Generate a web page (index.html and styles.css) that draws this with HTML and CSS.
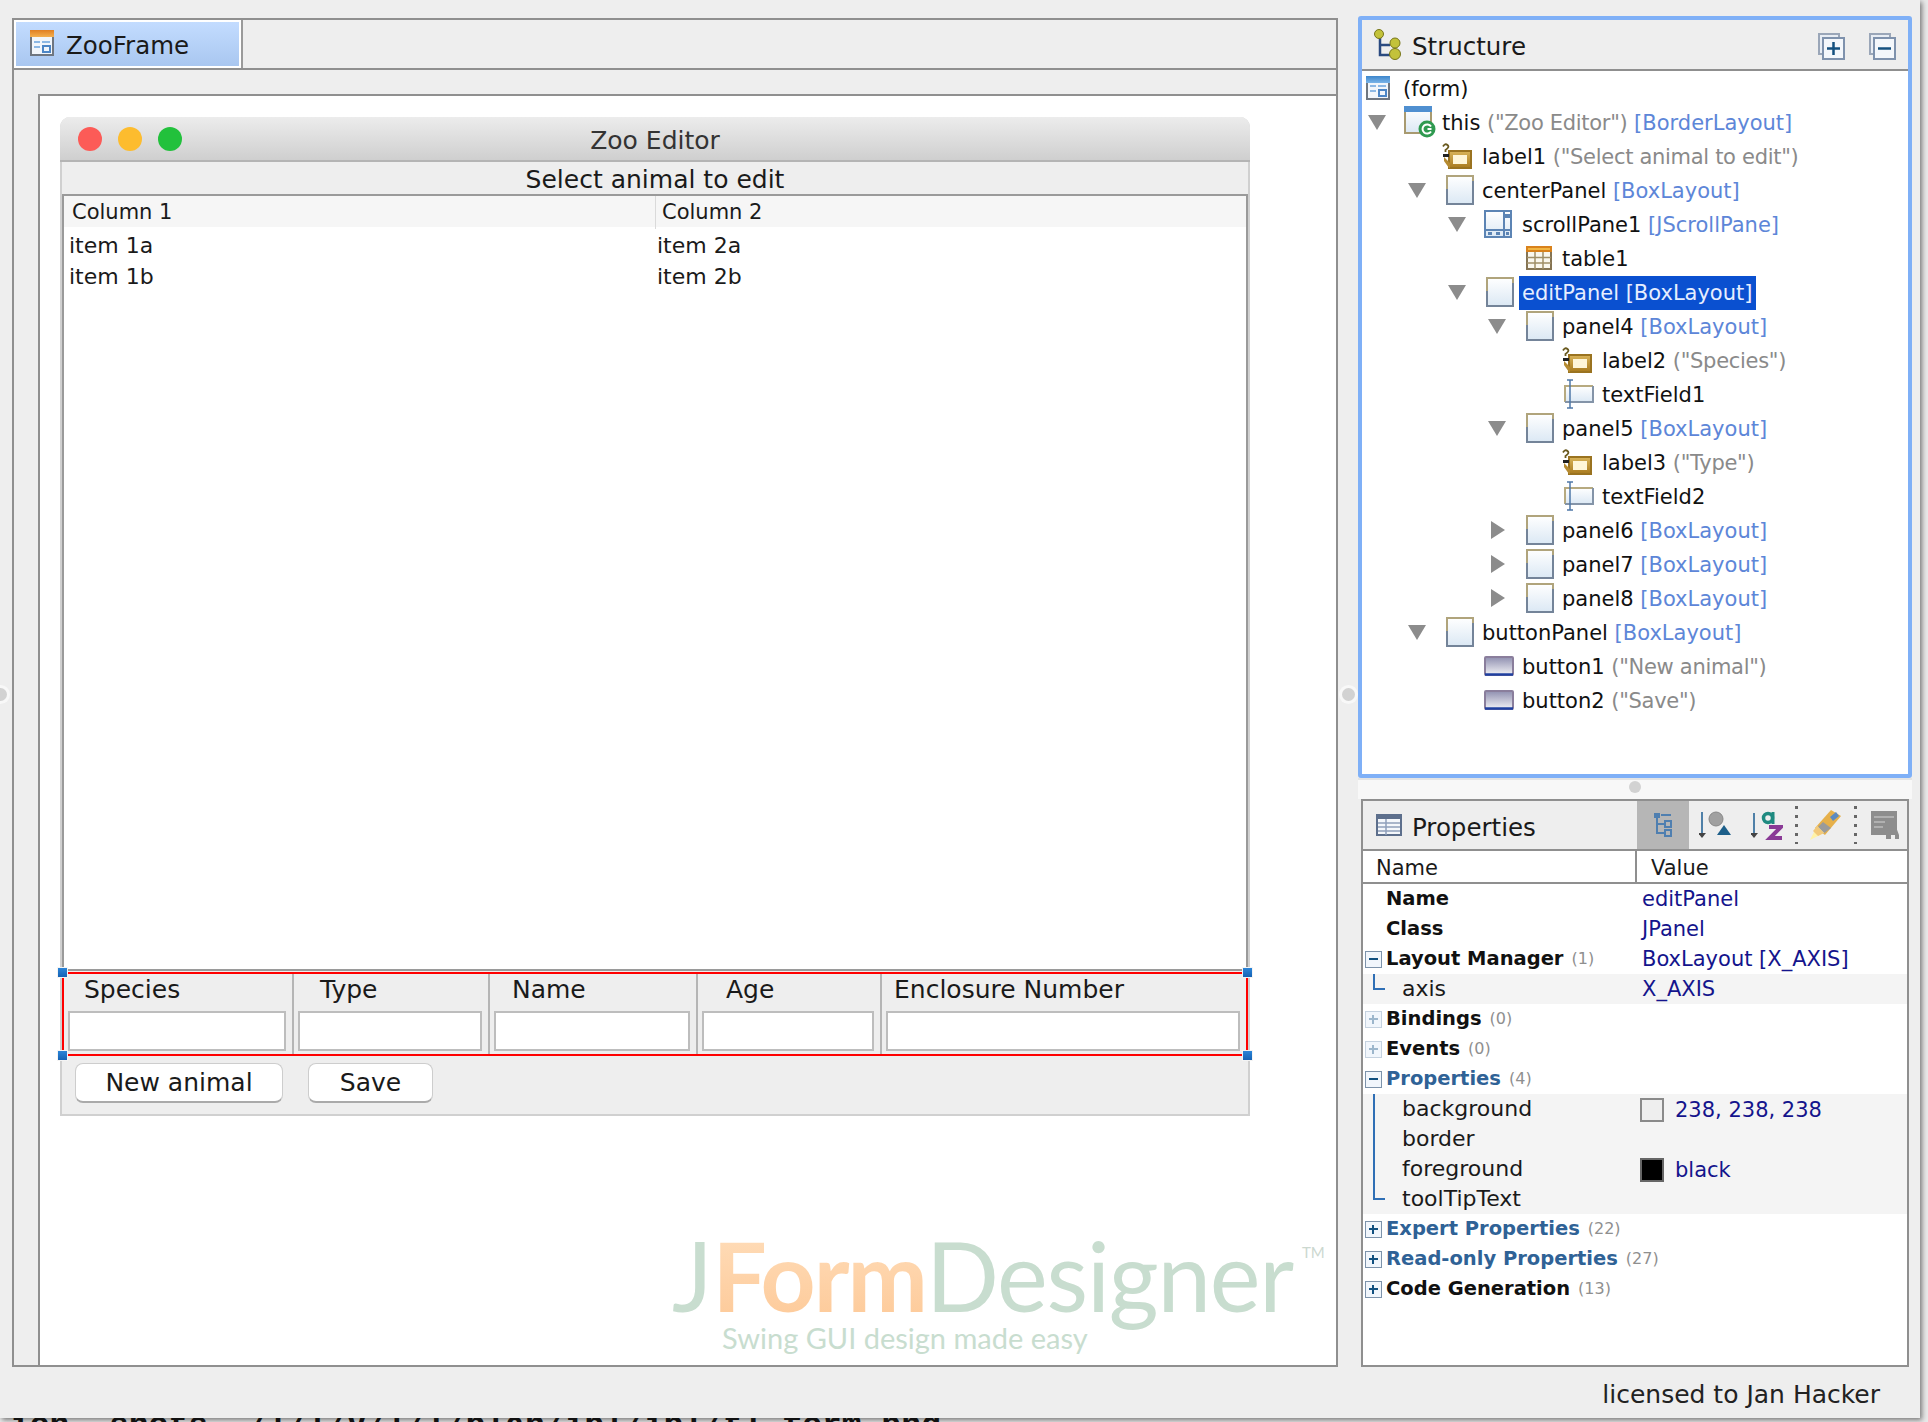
FILE: index.html
```html
<!DOCTYPE html>
<html lang="en">
<head>
	<meta charset="UTF-8">
	<title>JFormDesigner</title>
	<link rel="stylesheet" href="styles.css">
</head>
<body>
	<svg class="defs" width="0" height="0">
		<defs>
			<linearGradient id="panelfill" x1="0" y1="0" x2="0" y2="1"><stop offset="0" stop-color="#fff"/><stop offset="1" stop-color="#dbe8f4"/></linearGradient>
			<linearGradient id="btnfill" x1="0" y1="0" x2="0" y2="1"><stop offset="0" stop-color="#8f8fb0"/><stop offset="1" stop-color="#f2f2f6"/></linearGradient>
			<linearGradient id="tagfill" x1="0" y1="0" x2="0" y2="1"><stop offset="0" stop-color="#d9b45a"/><stop offset="1" stop-color="#a87a1e"/></linearGradient>
			<symbol id="i-form" viewBox="0 0 24 24">
				<rect x="1" y="1" width="22" height="22" fill="#f2f6fb" stroke="#6f7680" stroke-width="2"/>
				<rect x="4" y="9" width="6" height="2" fill="#8db8e4"/><rect x="4" y="14" width="6" height="2" fill="#8db8e4"/>
				<rect x="12" y="9" width="8" height="2" fill="#8db8e4"/><rect x="13" y="14" width="7" height="6" fill="none" stroke="#4d86c6" stroke-width="2"/>
			</symbol>
			<symbol id="i-panel" viewBox="0 0 28 30">
				<rect x="1" y="1" width="26" height="28" fill="url(#panelfill)"/>
				<path d="M1 29V1H27V6" fill="none" stroke="#b0a47c" stroke-width="2"/>
				<path d="M1 14V29H27V6" fill="none" stroke="#748499" stroke-width="2"/>
			</symbol>
			<symbol id="i-this" viewBox="0 0 32 32">
				<rect x="1" y="1" width="26" height="26" fill="url(#panelfill)" stroke="#a89a70" stroke-width="2"/>
				<rect x="0" y="0" width="28" height="6" fill="#4f8fd0"/>
				<circle cx="23" cy="23" r="8.500" fill="#2f9a50"/>
				<path d="M27 20.500A4.600 4.600 0 1 0 27 25.500M23.500 23H27.500" fill="none" stroke="#fff" stroke-width="2"/>
			</symbol>
			<symbol id="i-label" viewBox="0 0 30 26">
				<rect x="7" y="8" width="22" height="17" fill="url(#tagfill)" stroke="#9a7320" stroke-width="2"/>
				<rect x="11" y="12" width="14" height="9" fill="#fff6d8"/>
				<path d="M1 3.500Q3 0 5.500 2T3.500 7V9" fill="none" stroke="#6a5a20" stroke-width="1.800"/>
				<rect x="1" y="11" width="6" height="3" fill="#222"/><path d="M2 14L8 20V25H7L2 18Z" fill="#b58a30"/>
			</symbol>
			<symbol id="i-field" viewBox="0 0 30 30">
				<rect x="1" y="7" width="28" height="16" fill="url(#panelfill)"/>
				<path d="M1 23V7H29" fill="none" stroke="#b7aa80" stroke-width="2"/>
				<path d="M1 23H29V7" fill="none" stroke="#8494a8" stroke-width="2"/>
				<path d="M3 1H9M3 29H9M6 1V29" fill="none" stroke="#4f78a8" stroke-width="1.500"/>
			</symbol>
			<symbol id="i-button" viewBox="0 0 30 20">
				<rect x="1" y="1" width="28" height="18" rx="1" fill="url(#btnfill)" stroke="#8a7e9c" stroke-width="2"/>
				<path d="M1 18.500H29" stroke="#2040a0" stroke-width="2.500"/>
			</symbol>
			<symbol id="i-table" viewBox="0 0 26 24">
				<rect x="1" y="1" width="24" height="22" fill="#faf7ef" stroke="#857453" stroke-width="2"/>
				<rect x="0" y="0" width="26" height="6" fill="#d9821c"/><rect x="2" y="2" width="22" height="2" fill="#f2b642"/>
				<path d="M9 6V23M17 6V23M1 11.500H25M1 17H25" stroke="#a08f68" stroke-width="1.500"/>
			</symbol>
			<symbol id="i-scroll" viewBox="0 0 28 28">
				<rect x="1" y="1" width="26" height="26" fill="url(#panelfill)" stroke="#5c84b4" stroke-width="2"/>
				<path d="M20 1V27M1 20H27" stroke="#5c84b4" stroke-width="2"/>
				<rect x="21" y="4" width="5" height="4" fill="#5c84b4"/><rect x="4" y="22" width="4" height="3" fill="#5c84b4"/><rect x="12" y="22" width="4" height="3" fill="#5c84b4"/><rect x="22" y="22" width="3" height="3" fill="#5c84b4"/>
			</symbol>
		</defs>
	</svg>

	<div class="shell">
		<div class="app">
			<div class="grip grip-left"><span class="grip-dot"></span></div>

			<div class="editor">
				<div class="tabs">
					<div class="tab">
						<svg class="tab-icon" width="24" height="24"><use href="#i-form"/></svg>
						<span class="tab-band"></span>
						ZooFrame
					</div>
				</div>
				<div class="canvas">
					<div class="window">
						<div class="titlebar">
							<span class="light red"></span>
							<span class="light amber"></span>
							<span class="light green"></span>
							<span class="title">Zoo Editor</span>
						</div>
						<div class="select-label">Select animal to edit</div>
						<div class="table-box">
							<div class="table-grid table-head">
								<div>Column 1</div>
								<div class="col-two">Column 2</div>
							</div>
							<div class="table-grid table-row"><div>item 1a</div><div>item 2a</div></div>
							<div class="table-grid table-row"><div>item 1b</div><div>item 2b</div></div>
						</div>
						<div class="edit-panel">
							<span class="handle tl"></span>
							<span class="handle tr"></span>
							<span class="handle bl"></span>
							<span class="handle br"></span>
							<div class="edit-col"><div class="edit-label">Species</div><div class="edit-field"></div></div>
							<div class="edit-col"><div class="edit-label">Type</div><div class="edit-field"></div></div>
							<div class="edit-col"><div class="edit-label">Name</div><div class="edit-field"></div></div>
							<div class="edit-col"><div class="edit-label">Age</div><div class="edit-field"></div></div>
							<div class="edit-col"><div class="edit-label">Enclosure Number</div><div class="edit-field"></div></div>
						</div>
						<div class="button-row">
							<div class="btn btn-new">New animal</div>
							<div class="btn btn-save">Save</div>
						</div>
					</div>

					<div class="logo">
						<div class="logo-name"><span class="logo-j">J</span><span class="logo-form">Form</span><span class="logo-designer">Designer</span></div>
						<div class="logo-tag">Swing GUI design made easy</div>
						<span class="logo-tm">TM</span>
					</div>
				</div>
			</div>

			<div class="grip grip-mid"><span class="grip-dot"></span></div>

			<div class="side">
				<div class="structure">
					<div class="panel-head">
						<svg class="head-icon" width="28" height="32" viewBox="0 0 28 32">
							<path d="M6 6V26H16M6 16H16" fill="none" stroke="#2a4a80" stroke-width="2.500"/>
							<circle cx="5" cy="5" r="4.500" fill="#c3c23a" stroke="#77761a"/>
							<circle cx="21" cy="14" r="5" fill="#c3c23a" stroke="#77761a"/>
							<circle cx="21" cy="25" r="5.500" fill="#c3c23a" stroke="#77761a"/>
						</svg>
						<span class="panel-title">Structure</span>
						<svg class="head-btn" width="27" height="27" viewBox="0 0 27 27">
							<rect x="1" y="1" width="20" height="20" fill="#e8edf4" stroke="#9aa6b8" stroke-width="2"/>
							<rect x="5" y="5" width="21" height="21" fill="#f4f7fb" stroke="#7f92ad" stroke-width="2"/>
							<path d="M15.500 9V22M9 15.500H22" stroke="#14507f" stroke-width="2.500"/>
						</svg>
						<svg class="head-btn" width="27" height="27" viewBox="0 0 27 27">
							<rect x="1" y="1" width="20" height="20" fill="#e8edf4" stroke="#9aa6b8" stroke-width="2"/>
							<rect x="5" y="5" width="21" height="21" fill="#f4f7fb" stroke="#7f92ad" stroke-width="2"/>
							<path d="M9 15.500H22" stroke="#14507f" stroke-width="2.500"/>
						</svg>
					</div>
					<div class="tree">
						<div class="row root">
							<svg class="node-icon" width="24" height="24"><use href="#i-form"/></svg><span class="form-band"></span>
							<span class="node-text">(form)</span>
						</div>
						<div class="row d0"><i class="arrow down"></i><svg class="node-icon ic-this" width="32" height="32"><use href="#i-this"/></svg><span class="node-text">this <em>("Zoo Editor")</em> <b>[BorderLayout]</b></span></div>
						<div class="row d1"><i class="arrow"></i><svg class="node-icon ic-label" width="30" height="26"><use href="#i-label"/></svg><span class="node-text">label1 <em>("Select animal to edit")</em></span></div>
						<div class="row d1"><i class="arrow down"></i><svg class="node-icon ic-panel" width="28" height="30"><use href="#i-panel"/></svg><span class="node-text">centerPanel <b>[BoxLayout]</b></span></div>
						<div class="row d2"><i class="arrow down"></i><svg class="node-icon ic-scroll" width="28" height="28"><use href="#i-scroll"/></svg><span class="node-text">scrollPane1 <b>[JScrollPane]</b></span></div>
						<div class="row d3"><i class="arrow"></i><svg class="node-icon ic-table" width="26" height="24"><use href="#i-table"/></svg><span class="node-text">table1</span></div>
						<div class="row d2"><i class="arrow down"></i><svg class="node-icon ic-panel" width="28" height="30"><use href="#i-panel"/></svg><span class="node-text selected">editPanel [BoxLayout]</span></div>
						<div class="row d3"><i class="arrow down"></i><svg class="node-icon ic-panel" width="28" height="30"><use href="#i-panel"/></svg><span class="node-text">panel4 <b>[BoxLayout]</b></span></div>
						<div class="row d4"><i class="arrow"></i><svg class="node-icon ic-label" width="30" height="26"><use href="#i-label"/></svg><span class="node-text">label2 <em>("Species")</em></span></div>
						<div class="row d4"><i class="arrow"></i><svg class="node-icon" width="30" height="30"><use href="#i-field"/></svg><span class="node-text">textField1</span></div>
						<div class="row d3"><i class="arrow down"></i><svg class="node-icon ic-panel" width="28" height="30"><use href="#i-panel"/></svg><span class="node-text">panel5 <b>[BoxLayout]</b></span></div>
						<div class="row d4"><i class="arrow"></i><svg class="node-icon ic-label" width="30" height="26"><use href="#i-label"/></svg><span class="node-text">label3 <em>("Type")</em></span></div>
						<div class="row d4"><i class="arrow"></i><svg class="node-icon" width="30" height="30"><use href="#i-field"/></svg><span class="node-text">textField2</span></div>
						<div class="row d3"><i class="arrow right"></i><svg class="node-icon ic-panel" width="28" height="30"><use href="#i-panel"/></svg><span class="node-text">panel6 <b>[BoxLayout]</b></span></div>
						<div class="row d3"><i class="arrow right"></i><svg class="node-icon ic-panel" width="28" height="30"><use href="#i-panel"/></svg><span class="node-text">panel7 <b>[BoxLayout]</b></span></div>
						<div class="row d3"><i class="arrow right"></i><svg class="node-icon ic-panel" width="28" height="30"><use href="#i-panel"/></svg><span class="node-text">panel8 <b>[BoxLayout]</b></span></div>
						<div class="row d1"><i class="arrow down"></i><svg class="node-icon ic-panel" width="28" height="30"><use href="#i-panel"/></svg><span class="node-text">buttonPanel <b>[BoxLayout]</b></span></div>
						<div class="row d2"><i class="arrow"></i><svg class="node-icon" width="30" height="20"><use href="#i-button"/></svg><span class="node-text">button1 <em>("New animal")</em></span></div>
						<div class="row d2"><i class="arrow"></i><svg class="node-icon" width="30" height="20"><use href="#i-button"/></svg><span class="node-text">button2 <em>("Save")</em></span></div>
					</div>
				</div>

				<div class="splitter"><span class="grip-dot"></span></div>

				<div class="props">
					<div class="panel-head props-head">
						<svg class="head-icon" width="26" height="22" viewBox="0 0 26 22">
							<rect x="1" y="1" width="24" height="20" fill="#f4f7fb" stroke="#5d6f8c" stroke-width="2"/>
							<rect x="1" y="1" width="24" height="4" fill="#5d6f8c"/>
							<path d="M2 9H24M2 13H24M2 17H24M10 5V21" stroke="#8fa0bb" stroke-width="1.500"/>
						</svg>
						<span class="panel-title">Properties</span>
						<div class="toolbar">
							<div class="tool tool-on">
								<svg width="20" height="28" viewBox="0 0 20 28"><path d="M4 5V22H12M4 13H12M8 4H18" fill="none" stroke="#4f7fb0" stroke-width="2"/><rect x="1" y="2" width="6" height="5" fill="#4f7fb0"/><rect x="12" y="10" width="6" height="6" fill="none" stroke="#4f7fb0" stroke-width="2"/><rect x="12" y="19" width="6" height="6" fill="none" stroke="#4f7fb0" stroke-width="2"/></svg>
							</div>
							<div class="tool">
								<svg width="32" height="30" viewBox="0 0 32 30"><path d="M3 2V26" stroke="#4f80a8" stroke-width="2"/><path d="M-1 23H7L3 28Z" fill="#444"/><circle cx="17" cy="9" r="7" fill="#a0a0a0" stroke="#888"/><path d="M25 15L32 25H18Z" fill="#1d5f8a"/></svg>
							</div>
							<div class="tool">
								<svg width="32" height="32" viewBox="0 0 32 32"><path d="M3 4V27" stroke="#4f80a8" stroke-width="2"/><path d="M-1 24H7L3 29Z" fill="#444"/><circle cx="17" cy="9" r="4.500" fill="none" stroke="#1f8a80" stroke-width="3.500"/><path d="M22 3V15" stroke="#1f8a80" stroke-width="3"/><path d="M18 18H30L19 29H31" fill="none" stroke="#8a3a96" stroke-width="4"/></svg>
							</div>
							<span class="dots"></span>
							<div class="tool">
								<svg width="34" height="32" viewBox="0 0 32 32"><path d="M21 1L31 7L15 26L5 19Z" fill="#e6b04a"/><path d="M26 3L29 7L23 12L20 8Z" fill="#5c8ac0"/><path d="M13 13L21 19L13 25L7 19Z" fill="#9a9a9a"/><path d="M7 17L14 24L0 31Z" fill="#fff2a8"/><path d="M7 17L14 24L8 27L3 22Z" fill="#f2c97a"/></svg>
							</div>
							<span class="dots"></span>
							<div class="tool">
								<svg width="28" height="28" viewBox="0 0 28 28"><rect x="0" y="0" width="26" height="24" fill="#8d8d8d"/><path d="M3 6H23M3 11H14M3 16H12" stroke="#b0b0b0" stroke-width="2"/><path d="M15 24L18 16H25L28 24V28H24V24H20V28H15Z" fill="#8d8d8d"/></svg>
							</div>
						</div>
					</div>
					<div class="prop-head">
						<div class="prop-head-name">Name</div>
						<div class="prop-head-value">Value</div>
					</div>
					<div class="prow"><div class="pname strong"><span class="pbox empty"></span>Name</div><div class="pvalue">editPanel</div></div>
					<div class="prow"><div class="pname strong"><span class="pbox empty"></span>Class</div><div class="pvalue">JPanel</div></div>
					<div class="prow"><div class="pname strong"><span class="pbox minus"></span>Layout Manager <small>(1)</small></div><div class="pvalue">BoxLayout [X_AXIS]</div></div>
					<div class="prow sub last"><div class="pname">axis</div><div class="pvalue">X_AXIS</div></div>
					<div class="prow"><div class="pname strong"><span class="pbox plus faint"></span>Bindings <small>(0)</small></div></div>
					<div class="prow"><div class="pname strong"><span class="pbox plus faint"></span>Events <small>(0)</small></div></div>
					<div class="prow"><div class="pname strong link"><span class="pbox minus"></span>Properties <small>(4)</small></div></div>
					<div class="prow sub"><div class="pname">background</div><div class="pvalue has-swatch"><span class="swatch light-swatch"></span>238, 238, 238</div></div>
					<div class="prow sub"><div class="pname">border</div></div>
					<div class="prow sub"><div class="pname">foreground</div><div class="pvalue has-swatch"><span class="swatch black-swatch"></span>black</div></div>
					<div class="prow sub last"><div class="pname">toolTipText</div></div>
					<div class="prow"><div class="pname strong link"><span class="pbox plus"></span>Expert Properties <small>(22)</small></div></div>
					<div class="prow"><div class="pname strong link"><span class="pbox plus"></span>Read-only Properties <small>(27)</small></div></div>
					<div class="prow"><div class="pname strong"><span class="pbox plus"></span>Code Generation <small>(13)</small></div></div>
				</div>
			</div>
		</div>
		<div class="statusbar">licensed to Jan Hacker</div>
	</div>
	<div class="behind">ion  shots  /l/l/V/l/l/blah/ibl/ibl/tl form.png</div>
</body>
</html>
```

FILE: styles.css
```css
html, body {
	margin: 0;
	padding: 0;
}
body {
	width: 1928px;
	height: 1422px;
	overflow: hidden;
	background: #e9e9e9;
	font-family: "DejaVu Sans", sans-serif;
	color: #1a1a1a;
}
.defs {
	display: block;
	height: 0;
}
.shell {
	width: 1920px;
	height: 1418px;
	background: #eee;
	box-shadow: 2px 2px 5px #777;
}
.app {
	display: flex;
	height: 1367px;
}

/* splitter grips */
.grip {
	display: flex;
	align-items: center;
	justify-content: center;
	flex: none;
	box-sizing: border-box;
	padding-top: 22px;
}
.grip-left {
	width: 13px;
	margin-left: -6px;
}
.grip-mid {
	width: 20px;
}
.grip-dot {
	display: block;
	width: 13px;
	height: 13px;
	border-radius: 50%;
	background: #d2d2d2;
	box-shadow: 0 0 0 3px #f8f8f8;
}

/* left side: form editor */
.editor {
	display: flex;
	flex-direction: column;
	box-sizing: border-box;
	width: 1326px;
	height: 1349px;
	margin-top: 18px;
	margin-left: 5px;
	border: 2px solid #8f8f8f;
}
.tabs {
	flex: none;
	height: 48px;
	border-bottom: 2px solid #8f8f8f;
}
.tab {
	position: relative;
	display: flex;
	align-items: center;
	box-sizing: border-box;
	width: 227px;
	height: 48px;
	padding-left: 14px;
	padding-top: 3px;
	border: 2px solid #fff;
	background: linear-gradient(#c3dcff, #a9c7f0);
	font-size: 24.500px;
	box-shadow: 2px 0 0 #9a9a9a;
}
.tab-icon {
	margin-top: -3px;
	margin-right: 12px;
}
.tab-band {
	position: absolute;
	left: 14px;
	top: 8px;
	width: 24px;
	height: 7px;
	background: linear-gradient(#e07f22, #f4b050);
}
.canvas {
	position: relative;
	flex: 1;
	margin-top: 24px;
	margin-left: 24px;
	padding: 21px 0 0 20px;
	border-top: 2px solid #8f8f8f;
	border-left: 2px solid #8f8f8f;
	background: #fff;
}

/* the previewed window */
.window {
	box-sizing: border-box;
	width: 1190px;
	height: 999px;
	border: 2px solid #d0d0d0;
	border-top: 0;
	border-radius: 10px 10px 0 0;
	background: #eee;
}
.titlebar {
	position: relative;
	display: flex;
	align-items: center;
	gap: 16px;
	height: 42px;
	padding-left: 18px;
	padding-top: 1px;
	margin: 0 -2px;
	border-bottom: 2px solid #b4b4b4;
	border-radius: 10px 10px 0 0;
	background: linear-gradient(#ececec, #cfcfcf);
}
.light {
	flex: none;
	width: 24px;
	height: 24px;
	border-radius: 50%;
}
.red { background: #fc5b57; }
.amber { background: #fdbc2e; }
.green { background: #22c13c; }
.title {
	position: absolute;
	left: 0;
	right: 0;
	top: 7px;
	text-align: center;
	font-size: 25px;
	line-height: 34px;
	color: #333;
}
.select-label {
	height: 32px;
	line-height: 35px;
	text-align: center;
	font-size: 25px;
}
.table-box {
	box-sizing: border-box;
	height: 777px;
	border: 2px solid #9a9a9a;
	background: #fff;
}
.table-grid {
	display: grid;
}
.table-head {
	height: 31px;
	line-height: 33px;
	padding-left: 8px;
	grid-template-columns: 583px 1fr;
	background: #f6f6f6;
	font-size: 21px;
}
.col-two {
	padding-left: 6px;
	border-left: 1px solid #dadada;
}
.table-row {
	height: 31px;
	line-height: 33px;
	padding-left: 5px;
	grid-template-columns: 588px 1fr;
	font-size: 22px;
}
.table-head + .table-row {
	margin-top: 2px;
}
.edit-panel {
	position: relative;
	display: grid;
	grid-template-columns: 230px 196px 208px 184px 1fr;
	box-sizing: border-box;
	height: 84px;
	margin-top: 1px;
	border: 2px solid #f00;
}
.handle {
	position: absolute;
	width: 9px;
	height: 9px;
	background: linear-gradient(#2a84d8, #1562b4);
	border: 1px solid #f4f4f4;
}
.tl { left: -7px; top: -7px; }
.tr { right: -7px; top: -7px; }
.bl { left: -7px; bottom: -7px; }
.br { right: -7px; bottom: -7px; }
.edit-col {
	box-sizing: border-box;
	padding: 0 6px 0 4px;
	border-right: 2px solid #b5b5b5;
}
.edit-col:last-child {
	border-right: 0;
}
.edit-label {
	height: 37px;
	line-height: 31px;
	font-size: 25px;
}
.edit-col:nth-child(5) .edit-label { padding-left: 16px; }
.edit-col:nth-child(6) .edit-label { padding-left: 22px; }
.edit-col:nth-child(7) .edit-label { padding-left: 18px; }
.edit-col:nth-child(8) .edit-label { padding-left: 24px; }
.edit-col:nth-child(9) .edit-label { padding-left: 8px; }
.edit-field {
	box-sizing: border-box;
	height: 40px;
	border: 2px solid #bdbdbd;
	background: #fff;
}
.button-row {
	display: flex;
	gap: 25px;
	padding: 7px 0 0 13px;
}
.btn {
	box-sizing: border-box;
	height: 40px;
	line-height: 38px;
	text-align: center;
	font-size: 25px;
	border: 1px solid #cdcdcd;
	border-bottom: 2px solid #aaa;
	border-radius: 8px;
	background: #fff;
}
.btn-new { width: 208px; }
.btn-save { width: 125px; }

/* logo */
.logo {
	position: absolute;
	left: 632px;
	top: 1131px;
	width: 670px;
	font-family: "Lato", sans-serif;
	color: #c8ddcf;
}
.logo-name {
	font-size: 96px;
	line-height: 96px;
	font-weight: 400;
	white-space: nowrap;
}
.logo-form {
	font-weight: 700;
	letter-spacing: -2px;
	background: linear-gradient(#ffdfbd, #fdc896);
	-webkit-background-clip: text;
	background-clip: text;
	color: transparent;
}
.logo-designer {
	letter-spacing: -1.200px;
}
.logo-tag {
	margin: -2px 0 0 50px;
	font-size: 29px;
	font-weight: 400;
	line-height: 34px;
	white-space: nowrap;
}
.logo-tm {
	position: absolute;
	left: 630px;
	top: 16px;
	font-size: 15px;
	color: #ccd8d0;
}

/* right side */
.side {
	flex: none;
	width: 554px;
	margin-top: 16px;
}
.structure {
	box-sizing: border-box;
	height: 762px;
	border: 4px solid #7fb0f7;
	border-radius: 3px;
	background: #fff;
}
.panel-head {
	display: flex;
	align-items: center;
	box-sizing: border-box;
	height: 51px;
	padding-left: 12px;
	border-bottom: 2px solid #8f8f8f;
	background: #eee;
}
.head-icon {
	flex: none;
	margin-right: 10px;
}
.panel-title {
	flex: 1;
	margin-top: 4px;
	font-size: 24.500px;
}
.head-btn {
	flex: none;
	margin-right: 12px;
	margin-left: 12px;
	margin-top: 3px;
}
.tree {
	font-size: 21px;
}
.row {
	display: flex;
	align-items: center;
	height: 34px;
	white-space: nowrap;
}
.root {
	position: relative;
	padding-left: 4px;
}
.form-band {
	position: absolute;
	left: 4px;
	top: 5px;
	width: 24px;
	height: 7px;
	background: linear-gradient(#3d86cc, #7ab4e8);
}
.root .node-icon {
	margin-right: 13px;
}
.d0 { padding-left: 6px; }
.d1 { padding-left: 46px; }
.d2 { padding-left: 86px; }
.d3 { padding-left: 126px; }
.d4 { padding-left: 166px; }
.arrow {
	flex: none;
	display: block;
	box-sizing: border-box;
	width: 36px;
}
.arrow.down::before,
.arrow.right::before {
	content: "";
	display: block;
	width: 0;
	height: 0;
}
.arrow.down::before {
	border-left: 9px solid transparent;
	border-right: 9px solid transparent;
	border-top: 15px solid #8c8c8c;
}
.arrow.right::before {
	margin-left: 3px;
	border-top: 9px solid transparent;
	border-bottom: 9px solid transparent;
	border-left: 14px solid #8c8c8c;
}
.node-icon {
	flex: none;
	margin-right: 8px;
}
.ic-panel { margin-left: 2px; margin-right: 8px; }
.ic-scroll { margin-right: 10px; }
.ic-table { margin-left: 2px; margin-right: 10px; }
.ic-this { margin-right: 6px; }
.ic-label { margin-left: -2px; margin-right: 10px; }
.node-text {
	margin-top: 2px;
	color: #111;
}
.node-text em {
	font-style: normal;
	letter-spacing: -0.300px;
	color: #8a8a8a;
}
.node-text b {
	font-weight: normal;
	color: #5d86d8;
}
.selected {
	height: 34px;
	line-height: 34px;
	margin-left: -3px;
	padding: 0 4px 0 3px;
	background: #0a50d0;
	color: #e6eeff;
}
.splitter {
	display: flex;
	align-items: center;
	justify-content: center;
	height: 21px;
	padding-bottom: 3px;
	box-sizing: border-box;
	background: linear-gradient(#e4e4e4 2px, #f8f8f8 2px);
}
.splitter .grip-dot {
	box-shadow: none;
	width: 12px;
	height: 12px;
}
.props {
	box-sizing: border-box;
	height: 568px;
	margin: 0 3px;
	border: 2px solid #8f8f8f;
	background: #fff;
}
.props-head {
	height: 50px;
	padding-left: 13px;
}
.props-head .panel-title {
	flex: none;
	width: 225px;
}
.toolbar {
	display: flex;
	align-items: center;
	height: 48px;
}
.tool {
	display: flex;
	align-items: center;
	justify-content: center;
	width: 52px;
	height: 48px;
}
.tool-on {
	background: #b6b6b6;
}
.dots {
	flex: none;
	width: 3px;
	height: 38px;
	margin: 0 2px;
	background: repeating-linear-gradient(#666 0 3px, transparent 3px 9px);
}
.prop-head {
	display: flex;
	height: 33px;
	line-height: 35px;
	font-size: 21px;
	border-bottom: 2px solid #8f8f8f;
	box-sizing: border-box;
}
.prop-head-name {
	box-sizing: border-box;
	width: 272px;
	padding-left: 13px;
}
.prop-head-value {
	flex: 1;
	padding-left: 14px;
	margin-right: 3px;
	border-left: 2px solid #8f8f8f;
}
.prow {
	position: relative;
	display: flex;
	height: 30px;
	line-height: 30px;
	font-size: 21px;
	white-space: nowrap;
}
.pname {
	position: relative;
	display: flex;
	align-items: center;
	flex: none;
	width: 279px;
	padding-left: 23px;
	box-sizing: border-box;
}
.pname.strong {
	font-size: 19.500px;
	font-weight: bold;
	color: #111;
}
.pname.link {
	color: #2f6296;
}
.pname small {
	margin-left: 8px;
	font-size: 16px;
	font-weight: normal;
	color: #8f8f8f;
}
.pvalue {
	display: flex;
	align-items: center;
	color: #14148c;
	font-size: 21px;
}
.has-swatch {
	margin-top: 2px;
	margin-left: -2px;
}
.pbox {
	position: absolute;
	left: 2px;
	top: 7px;
	box-sizing: border-box;
	width: 17px;
	height: 17px;
	border: 1px solid #7d93ab;
	background: #f1f6fc;
}
.pbox.empty {
	display: none;
}
.pbox.faint {
	border-color: #c5d2e0;
}
.pbox::before,
.pbox.plus::after {
	content: "";
	position: absolute;
	left: 3px;
	top: 6px;
	width: 9px;
	height: 2px;
	background: #11507f;
}
.pbox.plus::after {
	left: 6px;
	top: 3px;
	width: 2px;
	height: 9px;
}
.pbox.faint::before,
.pbox.faint::after {
	background: #9cb6cc;
}
.sub {
	background: #f4f4f4;
}
.sub .pname {
	padding-left: 39px;
	font-size: 22px;
}
.sub::before {
	content: "";
	position: absolute;
	left: 10px;
	top: 0;
	bottom: 0;
	width: 2px;
	background: #2f6fb5;
}
.sub.last::before {
	bottom: 15px;
}
.sub.last::after {
	content: "";
	position: absolute;
	left: 10px;
	top: 14px;
	width: 12px;
	height: 2px;
	background: #2f6fb5;
}
.swatch {
	flex: none;
	box-sizing: border-box;
	width: 24px;
	height: 24px;
	margin-right: 11px;
	border: 2px solid #8a8a8a;
}
.light-swatch { background: #eee; }
.black-swatch { background: #000; border-color: #666; }
.statusbar {
	height: 51px;
	line-height: 56px;
	padding-right: 40px;
	text-align: right;
	font-size: 25px;
	color: #222;
}

/* bit of the window behind, cut off by the screenshot */
.behind {
	height: 4px;
	overflow: hidden;
	padding-left: 10px;
	font-family: "Liberation Mono", monospace;
	font-weight: bold;
	font-size: 33px;
	line-height: 18px;
	white-space: pre;
	color: #111;
}
```
